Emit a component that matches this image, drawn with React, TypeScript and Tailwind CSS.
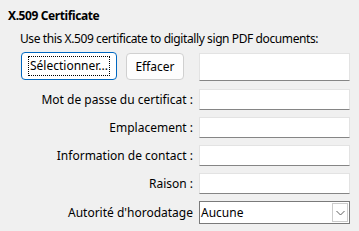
import React from 'react';

const font = { fontFamily: '"Noto Sans", "DejaVu Sans", sans-serif' };

const fields = [
  'Mot de passe du certificat :',
  'Emplacement :',
  'Information de contact :',
  'Raison :',
];

function TextField({ className = '' }: { className?: string }) {
  return (
    <div
      className={`w-[151px] bg-white border border-[#e3e3e3] border-b-[#858585] ${className}`}
    />
  );
}

export default function App() {
  return (
    <div
      className="w-[359px] h-[231px] bg-[#f0f0f0] text-[12px] text-black overflow-hidden"
      style={font}
    >
      <div className="pl-[8px] pt-[8px] h-[16px] box-content leading-[16px] font-bold tracking-[-0.4px]">
        X.509 Certificate
      </div>
      <div className="pl-[20px] mt-[7px] leading-[16px] tracking-[-0.4px]">
        Use this X.509 certificate to digitally sign PDF documents:
      </div>

      <div className="flex items-start mt-[5px] pl-[21px]">
        <button className="w-[96px] h-[28px] bg-white border border-[#0067c0] rounded-[4px] flex items-center justify-center">
          <span className="border border-dotted border-black px-[1px] leading-[18px]">
            Sélectionner...
          </span>
        </button>
        <button className="ml-[9px] mt-[1px] w-[58px] h-[27px] bg-[#fdfdfd] border border-[#d0d0d0] rounded-[4px] flex items-center justify-center">
          Effacer
        </button>
        <TextField className="ml-[15px] mt-[1px] h-[28px]" />
      </div>

      <div className="mt-[8px] flex flex-col gap-[7px]">
        {fields.map((label) => (
          <div key={label} className="flex items-center h-[21px]">
            <div className="w-[199px] pr-[6px] text-right whitespace-nowrap">{label}</div>
            <TextField className="h-[21px]" />
          </div>
        ))}
        <div className="flex items-center h-[23px]">
          <div className="w-[199px] pr-[6px] text-right whitespace-nowrap">
            Autorité d'horodatage
          </div>
          <div className="w-[151px] h-[23px] bg-white border border-[#7a7a7a] flex items-center">
            <span className="pl-[1px] flex-1">Aucune</span>
            <div className="mr-[1px] w-[16px] h-[19px] border border-[#cccccc] flex items-center justify-center">
              <svg width="9" height="6" viewBox="0 0 9 6" fill="none">
                <path d="M0.5 1 L4.5 5 L8.5 1" stroke="#606060" strokeWidth="1" />
              </svg>
            </div>
          </div>
        </div>
      </div>
    </div>
  );
}
